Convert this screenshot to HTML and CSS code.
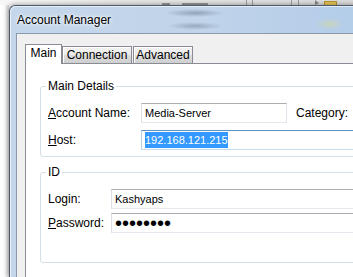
FILE: index.html
```html
<!DOCTYPE html>
<html lang="en">
<head>
	<meta charset="UTF-8">
	<meta name="viewport" content="width=device-width, initial-scale=1.0">
	<title>Account Manager</title>
	<link rel="stylesheet" href="styles.css">
</head>
<body>
	<div class="desk">
		<div class="behind-top">
			<span class="ghost g1"></span>
			<span class="ghost g2"></span>
			<span class="sep s1"></span>
			<span class="sep s2"></span>
			<span class="sep s3"></span>
			<span class="sep s4"></span>
			<span class="arrow"></span>
			<span class="folder"></span>
		</div>
		<div class="behind-row">
			<div class="behind-left"></div>

			<div class="window">
				<div class="titlebar">Account Manager</div>
				<div class="client">
					<div class="tabs">
						<div class="tab active t-main">Main</div>
						<div class="tab t-conn">Connection</div>
						<div class="tab t-adv">Advanced</div>
					</div>
					<div class="panel">
						<fieldset class="group">
							<legend>Main Details</legend>
							<div class="fields main-fields">
								<label><u>A</u>ccount Name:</label>
								<div class="textbox">Media-Server</div>
								<label class="cat">Cate<u>g</u>ory:</label>
								<span></span>
								<label><u>H</u>ost:</label>
								<div class="textbox focus wide"><span class="sel">192.168.121.215</span></div>
							</div>
						</fieldset>
						<fieldset class="group id-group">
							<legend>ID</legend>
							<div class="fields id-fields">
								<label>Login:</label>
								<div class="textbox">Kashyaps</div>
								<label><u>P</u>assword:</label>
								<div class="textbox"><span class="dots">&bull;&bull;&bull;&bull;&bull;&bull;&bull;&bull;</span></div>
							</div>
						</fieldset>
					</div>
				</div>
			</div>
		</div>
	</div>
</body>
</html>
```

FILE: styles.css
```css
*{
	margin: 0;
	padding: 0;
	box-sizing: border-box;
}
body{
	font-family: "Segoe UI", "Liberation Sans", Arial, sans-serif;
	font-size: 12px;
	color: #000;
	background: #fff;
	overflow: hidden;
}
.desk{
	width: 353px;
	height: 277px;
	overflow: hidden;
	display: flex;
	flex-direction: column;
	background: #fff;
}

/* whatever sits behind the dialog */
.behind-top{
	height: 5px;
	flex: none;
	display: flex;
	align-items: flex-end;
	background: linear-gradient(to right, #f6f6f6, #e6e6e6 40%, #dcdcdc);
}
.ghost{
	height: 2px;
	background: #555;
	opacity: .6;
}
.g1{ width: 8px; margin-left: 162px; }
.g2{ width: 26px; margin-left: 12px; }
.sep{
	width: 1px;
	height: 5px;
	background: #9a9a9a;
}
.s1{ margin-left: 38px; }
.s2{ margin-left: 5px; }
.s3{ margin-left: 38px; }
.s4{ margin-left: 6px; }
.arrow{
	width: 0;
	height: 0;
	margin-left: 16px;
	border-left: 4px solid #888;
	border-top: 3px solid transparent;
	border-bottom: 2px solid transparent;
}
.folder{
	width: 13px;
	height: 4px;
	margin-left: 5px;
	background: #e8c65a;
	border: 1px solid #b8932c;
	border-bottom: none;
}
.behind-row{
	flex: 1;
	display: flex;
	min-height: 0;
	background: #fff;
}
.behind-left{
	width: 9px;
	flex: none;
	background: linear-gradient(to right, #fff 0, #fbfbfb 4px, #d6d6d6 9px);
}

/* aero window */
.window{
	width: 560px;
	flex: none;
	display: flex;
	flex-direction: column;
	border: 1px solid #4e5a69;
	border-right: none;
	border-bottom: none;
	border-radius: 6px 0 0 0;
	box-shadow: -1px -1px 4px rgba(0,0,0,.3), inset 1px 1px 0 rgba(255,255,255,.6);
	background:
		radial-gradient(ellipse 30px 4px at 185px 7px, rgba(60,70,90,.35), transparent),
		radial-gradient(ellipse 28px 4px at 185px 20px, rgba(60,70,90,.3), transparent),
		radial-gradient(ellipse 14px 6px at 320px 18px, rgba(220,220,150,.5), transparent),
		linear-gradient(to right, #c4d6ea 0, #c0d4ea 35%, #b4cde9 60%, #bcd4ee 100%);
}
.titlebar{
	height: 27px;
	padding: 6px 0 0 7px;
	line-height: 16px;
	text-shadow: 0 0 6px #fff, 0 0 3px #fff;
}
.client{
	flex: 1;
	margin-left: 6px;
	background: #f0f0f0;
	border-top: 1px solid #8a99ad;
	border-left: 1px solid #8a99ad;
	padding: 10px 0 0 8px;
	display: flex;
	flex-direction: column;
}

/* tabs */
.tabs{
	display: flex;
	align-items: flex-end;
}
.tab{
	height: 17px;
	line-height: 16px;
	text-align: center;
	border: 1px solid #898c95;
	border-bottom: none;
	background: linear-gradient(#f2f2f2, #ebebeb 50%, #dddddd 50%, #cfcfcf);
	box-shadow: inset 1px 1px 0 #fff;
}
.tab.active{
	height: 20px;
	margin-bottom: -1px;
	padding-bottom: 3px;
	background: #fff;
	box-shadow: none;
	position: relative;
	z-index: 1;
}
.t-main{ width: 37px; }
.t-conn{ width: 70px; }
.t-adv{ width: 60px; margin-left: 1px; }

.panel{
	flex: 1;
	background: #fff;
	border-top: 1px solid #898c95;
	border-left: 1px solid #898c95;
	padding: 15px 14px 0 14px;
}

/* group boxes */
.group{
	border: 1px solid #d5dfe5;
	border-radius: 3px;
	padding: 9px 7px 6px 7px;
}
.group legend{
	margin-left: -2px;
	padding: 0 2px;
	line-height: 15px;
}
.id-group{
	margin-top: 8px;
	padding-bottom: 29px;
}
.fields{
	display: grid;
	align-items: center;
}
.main-fields{
	grid-template-columns: 93px 146px auto 1fr;
	row-gap: 7px;
}
.id-fields{
	grid-template-columns: 63px 1fr;
	row-gap: 4px;
}
.cat{
	margin-left: 9px;
}
.wide{
	grid-column: 2 / -1;
}

.textbox{
	height: 20px;
	padding: 0 3px;
	display: flex;
	align-items: center;
	font-size: 11px;
	white-space: nowrap;
	overflow: hidden;
	background: #fff;
	border: 1px solid;
	border-color: #abadb3 #e2e3ea #e3e9ef #dbdfe6;
}
.textbox.focus{
	border-color: #5d8fc0 #b4d0ea #c5dcef #b4d0ea;
}
.sel{
	height: 16px;
	line-height: 16px;
	background: #3399ff;
	color: #fff;
}
.dots{
	font-size: 20px;
	line-height: 18px;
}
```
